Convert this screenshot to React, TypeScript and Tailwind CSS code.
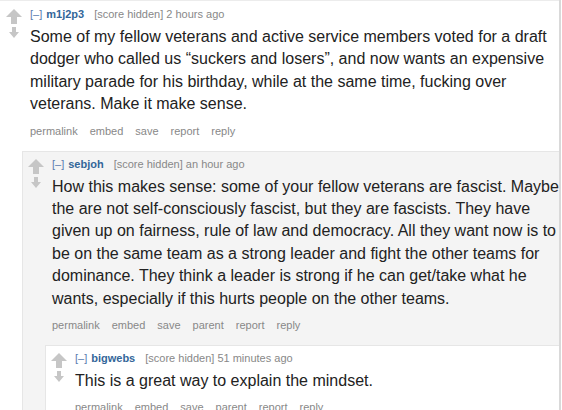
import React from "react";

const UpArrow = () => (
  <svg width="16" height="15" viewBox="0 0 16 15" className="block">
    <path d="M8 0 L16 8 H11 V15 H5 V8 H0 Z" fill="#c6c6c6" />
  </svg>
);
const DownArrow = () => (
  <svg width="10" height="11" viewBox="0 0 10 11" className="block">
    <path d="M3 0 H7 V5 H10 L5 11 L0 5 H3 Z" fill="#c6c6c6" />
  </svg>
);

type C = {
  author: string;
  time: string;
  body: string;
  buttons: string[];
  bg: string;
  first?: boolean;
  children?: React.ReactNode;
};

function Comment({ author, time, body, buttons, bg, first, children }: C) {
  return (
    <div
      className={
        (first ? "border-t border-[#ececec] " : "border-t border-l border-[#e6e6e6] ") + bg
      }
    >
      <div className="flex">
        <div
          className={
            (first ? "ml-[6px] pt-[8px] " : "ml-[5px] pt-[7px] ") +
            "flex w-[16px] shrink-0 flex-col items-center"
          }
        >
          <UpArrow />
          <div className="mt-[3px]">
            <DownArrow />
          </div>
        </div>
        <div className={(first ? "pt-[5px] " : "pt-[4px] ") + "ml-[8px] flex-1"}>
          <div className="flex items-center text-[11px] leading-[16px]">
            <span className="text-[#5a7bb0]">[–]</span>
            <span className="ml-[4px] font-bold text-[#336699]">{author}</span>
            <span className="ml-[10px] text-[#888888]">[score hidden] {time}</span>
          </div>
          <p className="mt-[4px] text-[16px] leading-[22.4px] text-[#222222]">{body}</p>
          <div className="mt-[7px] flex gap-[12px] text-[11px] leading-[16px] text-[#888888]">
            {buttons.map((b) => (
              <span key={b}>{b}</span>
            ))}
          </div>
        </div>
      </div>
      {children ? <div className="ml-[22px] mt-[12px]">{children}</div> : <div className="h-[40px]" />}
    </div>
  );
}

export default function App() {
  return (
    <div
      className="h-[410px] w-[562px] overflow-hidden bg-white"
      style={{ fontFamily: '"Liberation Sans", Arial, sans-serif' }}
    >
      <div className="w-[561px] border-r-2 border-[#d9d9d9]">
        <Comment
          first
          bg="bg-white"
          author="m1j2p3"
          time="2 hours ago"
          body="Some of my fellow veterans and active service members voted for a draft dodger who called us “suckers and losers”, and now wants an expensive military parade for his birthday, while at the same time, fucking over veterans. Make it make sense."
          buttons={["permalink", "embed", "save", "report", "reply"]}
        >
          <Comment
            bg="bg-[#f4f4f4]"
            author="sebjoh"
            time="an hour ago"
            body="How this makes sense: some of your fellow veterans are fascist. Maybe the are not self-consciously fascist, but they are fascists. They have given up on fairness, rule of law and democracy. All they want now is to be on the same team as a strong leader and fight the other teams for dominance. They think a leader is strong if he can get/take what he wants, especially if this hurts people on the other teams."
            buttons={["permalink", "embed", "save", "parent", "report", "reply"]}
          >
            <Comment
              bg="bg-white"
              author="bigwebs"
              time="51 minutes ago"
              body="This is a great way to explain the mindset."
              buttons={["permalink", "embed", "save", "parent", "report", "reply"]}
            />
          </Comment>
        </Comment>
      </div>
    </div>
  );
}
